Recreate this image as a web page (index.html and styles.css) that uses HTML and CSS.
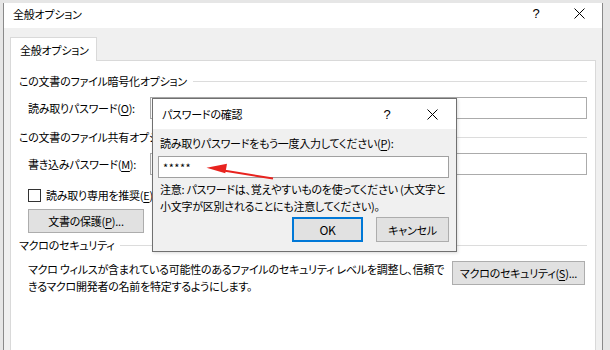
FILE: index.html
```html
<!DOCTYPE html>
<html lang="ja">
<head>
    <meta charset="UTF-8">
    <title>全般オプション</title>
    <link rel="stylesheet" href="styles.css">
</head>
<body>
    <div class="window">
        <div class="titlebar">
            <span class="title">全般オプション</span>
            <span class="help">?</span>
            <span class="close">
                <svg width="11" height="11" viewBox="0 0 11 11"><path d="M0.5 0.5L10.5 10.5M10.5 0.5L0.5 10.5" stroke="#000" stroke-width="1"/></svg>
            </span>
        </div>

        <div class="window-body">
            <div class="tabs">
                <div class="tab">全般オプション</div>
            </div>

            <div class="panel">
                <div class="group-title"><span>この文書のファイル暗号化オプション</span></div>
                <div class="field-row">
                    <label>読み取りパスワード(<u>O</u>):</label>
                    <div class="textbox"></div>
                </div>

                <div class="group-title second"><span>この文書のファイル共有オプション</span></div>
                <div class="field-row">
                    <label>書き込みパスワード(<u>M</u>):</label>
                    <div class="textbox"></div>
                </div>

                <div class="check-row">
                    <span class="checkbox"></span>
                    <span>読み取り専用を推奨(<u>E</u>)</span>
                </div>
                <div class="protect-row">
                    <button class="win-btn">文書の保護(<u>P</u>)...</button>
                </div>

                <div class="group-title third"><span>マクロのセキュリティ</span></div>
                <div class="macro-row">
                    <p class="macro-text">マクロ ウィルスが含まれている可能性のあるファイルのセキュリティ レベルを調整し、信頼で<br>きるマクロ開発者の名前を特定するようにします。</p>
                    <button class="win-btn macro-btn">マクロのセキュリティ(<u>S</u>)...</button>
                </div>
            </div>
        </div>
    </div>

    <div class="dialog">
        <div class="dialog-title">
            <span class="title">パスワードの確認</span>
            <span class="help">?</span>
            <span class="close">
                <svg width="11" height="11" viewBox="0 0 11 11"><path d="M0.5 0.5L10.5 10.5M10.5 0.5L0.5 10.5" stroke="#000" stroke-width="1"/></svg>
            </span>
        </div>
        <div class="dialog-body">
            <label class="dialog-label">読み取りパスワードをもう一度入力してください(<u>P</u>):</label>
            <div class="textbox dialog-input">*****</div>
            <p class="note">注意: パスワードは、覚えやすいものを使ってください (大文字と<br>小文字が区別されることにも注意してください)。</p>
            <div class="dialog-buttons">
                <button class="win-btn ok-btn">OK</button>
                <button class="win-btn cancel-btn">キャンセル</button>
            </div>
        </div>
    </div>

    <svg class="arrow" width="610" height="350" viewBox="0 0 610 350">
        <line x1="273" y1="178.5" x2="222" y2="170.3" stroke="#e8231f" stroke-width="2"/>
        <polygon points="206.5,167.7 227,163.8 225.3,173.2" fill="#e8231f"/>
    </svg>
</body>
</html>
```

FILE: styles.css
```css
body {
    margin: 0;
    padding: 3px 0 0 3px;
    width: 610px;
    height: 350px;
    box-sizing: border-box;
    overflow: hidden;
    background: #e6e6e6;
    font-family: "Noto Sans CJK JP", "Noto Sans", sans-serif;
    font-size: 11px;
    letter-spacing: -0.25px;
    font-feature-settings: "palt";
    color: #000;
    position: relative;
}

u {
    text-decoration-thickness: 1px;
    text-underline-offset: 2px;
}

.window {
    width: 598px;
    height: 347px;
    border-left: 1px solid #8a8a8a;
    border-right: 1px solid #8a8a8a;
    background: #f0f0f0;
    display: flex;
    flex-direction: column;
}

.titlebar {
    height: 25px;
    background: #fff;
    display: flex;
    align-items: center;
    padding-bottom: 4px;
    box-sizing: border-box;
}

.titlebar .title {
    margin-left: 9px;
    flex: 1;
}

.help {
    font-family: "Liberation Sans", sans-serif;
    font-size: 13px;
    width: 12px;
    text-align: center;
}

.titlebar .help {
    margin-right: 32px;
}

.close {
    display: flex;
    width: 11px;
}

.titlebar .close {
    margin-right: 17px;
}

.window-body {
    flex: 1;
    padding: 9px 6px 0 6px;
    display: flex;
    flex-direction: column;
}

.tabs {
    display: flex;
}

.tab {
    width: 87px;
    height: 24px;
    box-sizing: border-box;
    padding-left: 9px;
    line-height: 24px;
    background: #fff;
    border: 1px solid #d9d9d9;
    border-bottom: none;
    margin-bottom: -1px;
    position: relative;
    z-index: 1;
}

.panel {
    flex: 1;
    background: #fff;
    border: 1px solid #d9d9d9;
    border-bottom: none;
    padding: 12px 8px 0 8px;
}

.group-title {
    display: flex;
    align-items: center;
    height: 16px;
    line-height: 16px;
}

.group-title::after {
    content: "";
    flex: 1;
    border-top: 1px solid #dcdcdc;
    margin-left: 6px;
}

.group-title.second {
    margin-top: 10px;
}

.group-title.third {
    margin-top: 4px;
}

.field-row {
    display: flex;
    align-items: center;
    margin-top: 8px;
    padding-left: 9px;
}

.field-row label {
    width: 122px;
}

.textbox {
    flex: 1;
    height: 22px;
    box-sizing: border-box;
    border: 1px solid #ababab;
    background: #fff;
}

.check-row {
    display: flex;
    align-items: center;
    margin-top: 12px;
    padding-left: 9px;
    height: 16px;
}

.checkbox {
    width: 13px;
    height: 13px;
    box-sizing: border-box;
    border: 1px solid #333;
    margin-right: 5px;
}

.protect-row {
    margin-top: 6px;
    padding-left: 9px;
}

.win-btn {
    font: inherit;
    letter-spacing: inherit;
    color: #000;
    background: #e1e1e1;
    border: 1px solid #adadad;
    height: 24px;
    padding: 0 12px;
    line-height: 20px;
    white-space: nowrap;
}

.protect-row .win-btn {
    width: 116px;
}

.macro-row {
    display: flex;
    align-items: flex-start;
    padding-left: 9px;
    margin-top: 8px;
}

.macro-text {
    margin: 0;
    flex: 1;
    line-height: 17px;
    white-space: nowrap;
}

.macro-btn {
    flex-shrink: 0;
    width: 133px;
    padding: 0;
    margin-right: 2px;
}

.dialog {
    position: absolute;
    left: 152px;
    top: 98px;
    width: 303px;
    height: 152px;
    border: 1px solid #707070;
    background: #f0f0f0;
    box-shadow: 1px 1px 3px rgba(0, 0, 0, 0.15);
    display: flex;
    flex-direction: column;
}

.dialog-title {
    height: 30px;
    background: #fff;
    display: flex;
    align-items: center;
    flex-shrink: 0;
}

.dialog-title .title {
    margin-left: 9px;
    flex: 1;
}

.dialog-title .help {
    margin-right: 34px;
}

.dialog-title .close {
    margin-right: 18px;
}

.dialog-body {
    padding: 6px 7px 0 5px;
}

.dialog-label {
    display: block;
    padding-left: 2px;
    line-height: 16px;
}

.dialog-input {
    margin-top: 5px;
    border-color: #a0a0a0;
    padding-left: 4px;
    line-height: 20px;
    letter-spacing: 0.5px;
}

.note {
    margin: 3px 0 0 2px;
    line-height: 17px;
    white-space: nowrap;
}

.dialog-buttons {
    display: flex;
    justify-content: flex-end;
    gap: 13px;
    margin-top: 2px;
}

.dialog-buttons .win-btn {
    height: 25px;
    padding: 0;
}

.ok-btn {
    width: 71px;
    border: 2px solid #0078d7;
    font-size: 12px;
}

.cancel-btn {
    width: 73px;
}

.arrow {
    position: absolute;
    left: 0;
    top: 0;
    pointer-events: none;
}
```
